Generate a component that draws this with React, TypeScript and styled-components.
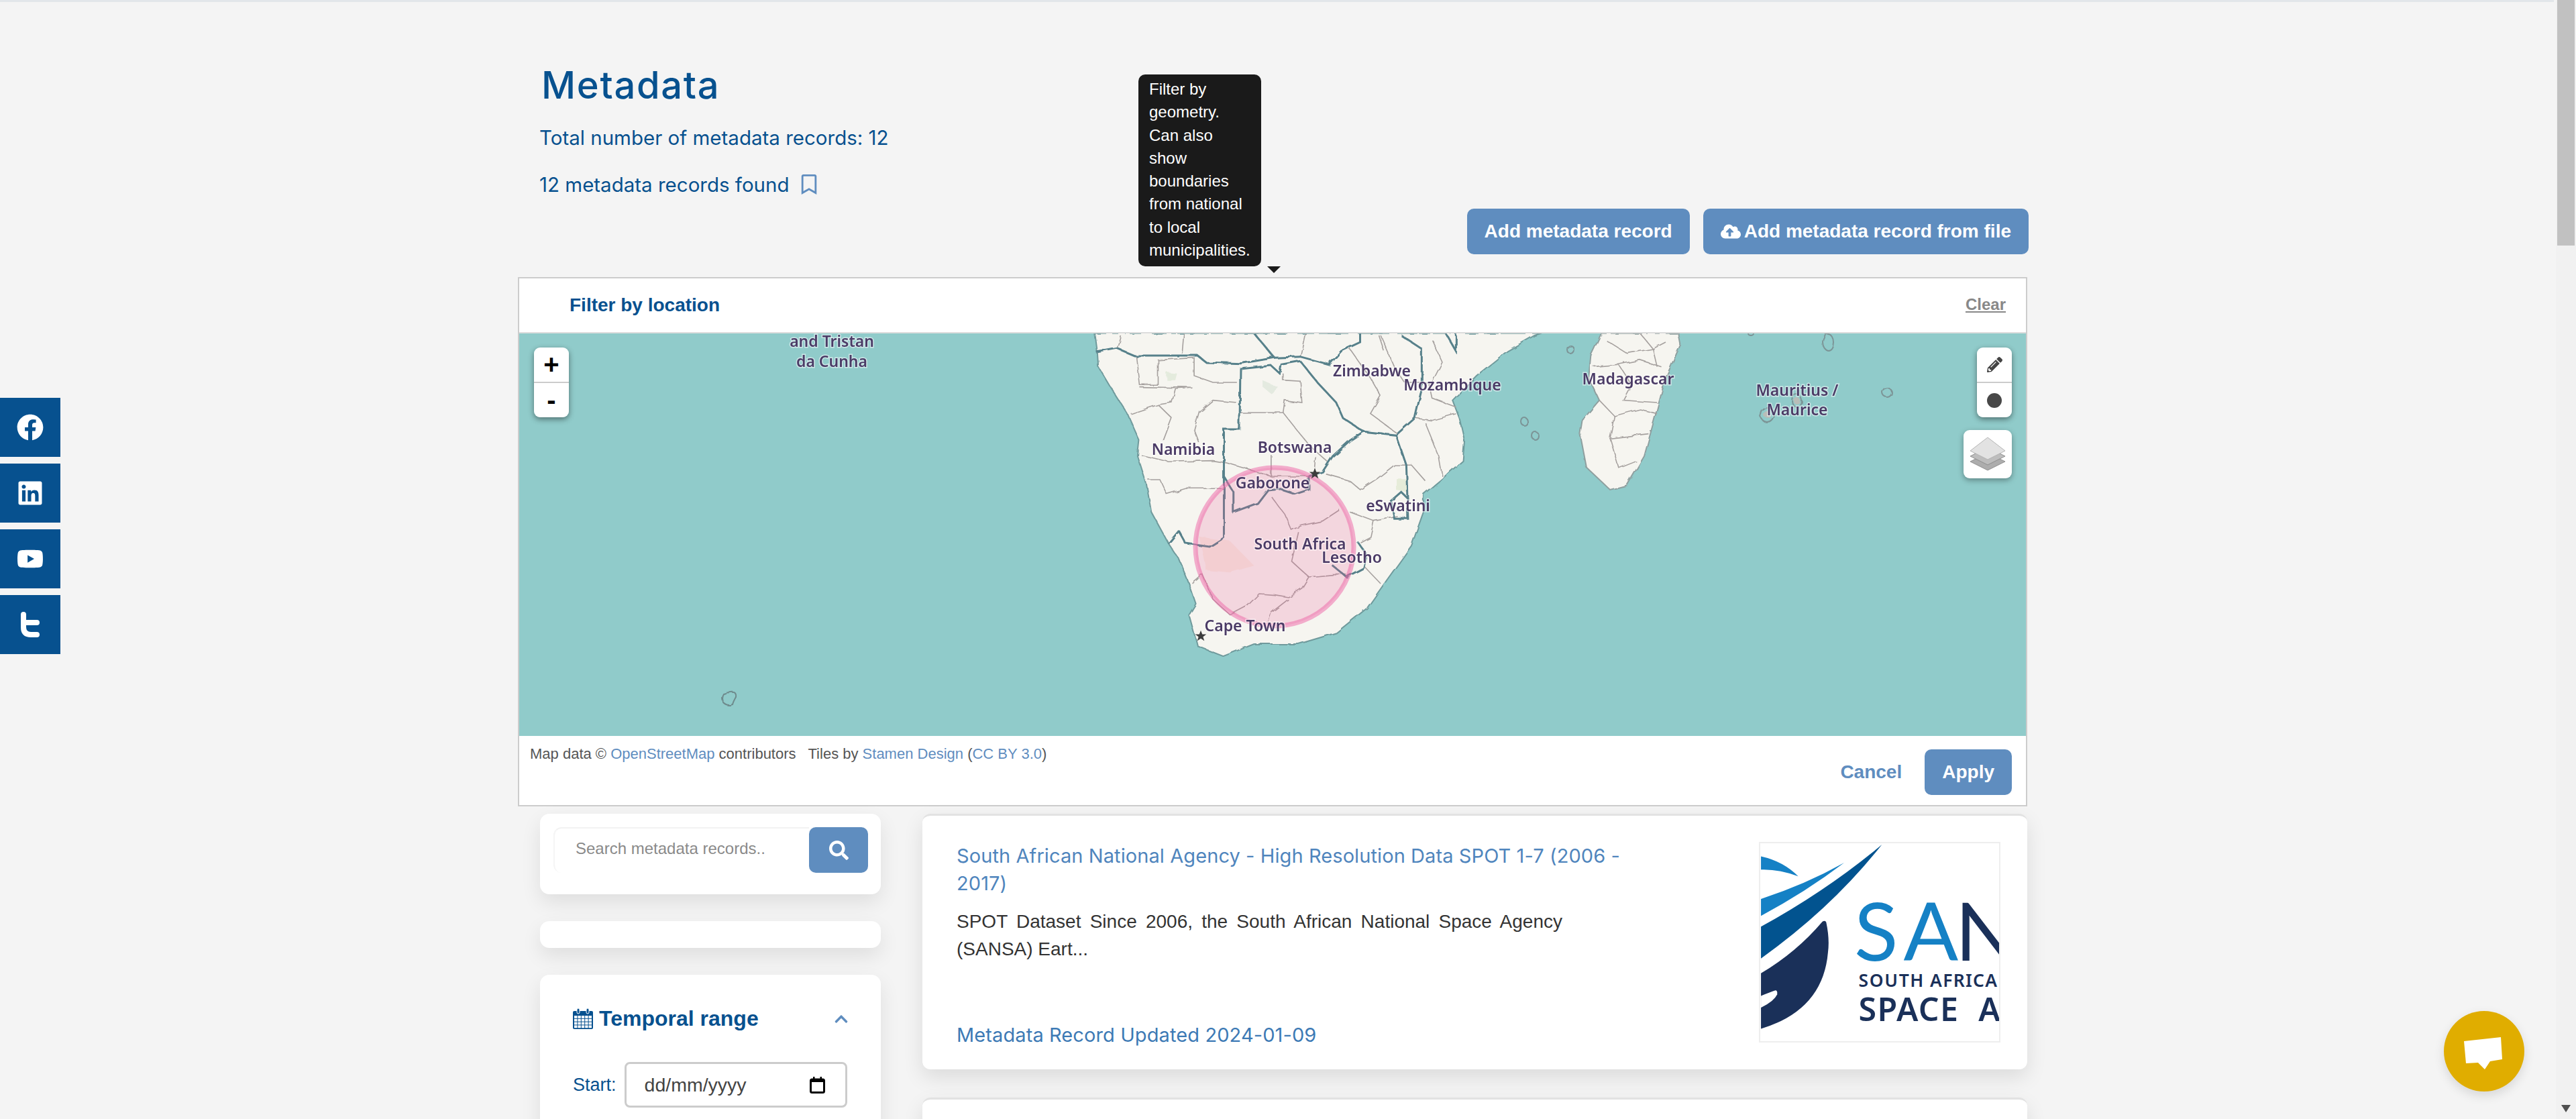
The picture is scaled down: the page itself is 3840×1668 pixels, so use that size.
import React from "react";
import styled, { createGlobalStyle } from "styled-components";
import { FaFacebook, FaLinkedin, FaYoutube, FaCloudUploadAlt, FaSearch, FaChevronUp, FaPencilAlt, FaRegBookmark } from "react-icons/fa";

const BLUE = "#07518f";
const SOFT_BLUE = "#5f8dbf";

const GlobalStyle = createGlobalStyle`
  html, body {
    margin: 0;
    height: 1668px;
    overflow: hidden;
    background: #f4f4f4;
    font-family: "Liberation Sans", Arial, sans-serif;
  }
  * { box-sizing: border-box; }
`;

const Page = styled.div`
  width: 3807px;
  height: 1668px;
  overflow: hidden;
  border-top: 3px solid #e2e6ea;
  padding-left: 772px;
`;

const Container = styled.div`
  position: relative;
  width: 2250px;
`;

const Header = styled.header`
  height: 410px;
  padding: 0 0 34px 32px;
  display: flex;
  justify-content: space-between;
  align-items: flex-end;
`;

const TitleBlock = styled.div`
  align-self: flex-start;
  padding-top: 94px;
`;

const Title = styled.h1`
  margin: 0 0 0 3px;
  font: 500 56px/60px Inter, sans-serif;
  letter-spacing: 1.7px;
  color: ${BLUE};
`;

const Count = styled.p`
  margin: 0;
  display: flex;
  align-items: center;
  gap: 14px;
  font: 400 29.5px/40px Inter, sans-serif;
  color: ${BLUE};
  &:first-of-type { margin-top: 28px; }
  & + & { margin-top: 30px; }
  svg { color: ${SOFT_BLUE}; font-size: 30px; }
`;

const Actions = styled.div`
  display: flex;
  gap: 20px;
  margin-right: -2px;
`;

const Button = styled.button`
  height: 68px;
  padding: 0 26px;
  border: 0;
  border-radius: 10px;
  background: ${SOFT_BLUE};
  color: #fff;
  font: 700 28px "Liberation Sans", sans-serif;
  display: flex;
  align-items: center;
  gap: 5px;
`;

const Tooltip = styled.div`
  position: absolute;
  left: 925px;
  top: 108px;
  width: 183px;
  height: 286px;
  padding: 5px 16px;
  border-radius: 10px;
  background: #1a1a1a;
  color: #fff;
  font-size: 24px;
  line-height: 34.3px;
  &::after {
    content: "";
    position: absolute;
    left: 192px;
    top: 286px;
    border: 10px solid transparent;
    border-top-color: #1a1a1a;
    border-bottom: 0;
  }
`;

const Panel = styled.section`
  height: 789px;
  border: 2px solid #ccc;
  background: #fff;
`;

const PanelHead = styled.div`
  height: 82px;
  padding: 0 30px 0 75px;
  border-bottom: 2px solid #ddd;
  display: flex;
  justify-content: space-between;
  align-items: center;
`;

const PanelTitle = styled.span`
  font-size: 28px;
  font-weight: 700;
  color: ${BLUE};
`;

const Clear = styled.span`
  margin-bottom: 2px;
  font-size: 24px;
  font-weight: 700;
  color: #888;
  text-decoration: underline;
`;

const MapArea = styled.div`
  position: relative;
  height: 600px;
  background: #90cbca;
  overflow: hidden;
`;

const MapSvg = styled.svg`
  display: block;
  width: 100%;
  height: 100%;
  filter: blur(0.5px);
`;

const MapLabel = styled.text`
  font-family: "Noto Sans", sans-serif;
  font-size: 23px;
  font-weight: 600;
  fill: #4b3b66;
  stroke: rgba(255, 255, 255, 0.55);
  stroke-width: 3px;
  paint-order: stroke;
  text-anchor: middle;
  dominant-baseline: middle;
`;

const ControlStack = styled.div<{ $side: "left" | "right" }>`
  position: absolute;
  top: 21px;
  ${(p) => (p.$side === "left" ? "left: 22px;" : "right: 21px;")}
  width: 52px;
  height: 104px;
  display: flex;
  flex-direction: column;
  border-radius: 9px;
  overflow: hidden;
  box-shadow: 0 3px 8px rgba(0, 0, 0, 0.45);
`;

const ControlButton = styled.div`
  flex: 1;
  background: #fff;
  display: flex;
  align-items: center;
  justify-content: center;
  font: 700 40px "Liberation Sans", sans-serif;
  color: #000;
  & + & { border-top: 2px solid #ccc; }
`;

const Dot = styled.span`
  width: 22px;
  height: 22px;
  border-radius: 50%;
  background: #484848;
`;

const LayersButton = styled.div`
  position: absolute;
  top: 144px;
  right: 21px;
  width: 72px;
  height: 72px;
  border-radius: 9px;
  background: #fff;
  display: flex;
  align-items: center;
  justify-content: center;
  box-shadow: 0 3px 8px rgba(0, 0, 0, 0.35);
`;

const PanelFoot = styled.div`
  height: 103px;
  padding: 15px 21px 0 16px;
  display: flex;
  justify-content: space-between;
  align-items: flex-start;
`;

const Attribution = styled.div`
  font-size: 22px;
  line-height: 24px;
  color: #555;
  white-space: pre;
  a { color: ${SOFT_BLUE}; text-decoration: none; }
`;

const FootActions = styled.div`
  display: flex;
  align-items: center;
  gap: 34px;
  margin-top: 5px;
`;

const Cancel = styled.span`
  font-size: 28px;
  font-weight: 700;
  color: ${SOFT_BLUE};
`;

const Content = styled.div`
  margin-top: 11px;
  padding-left: 33px;
  display: grid;
  grid-template-columns: 508px 1647px;
  column-gap: 62px;
  margin-right: -2px;
`;

const Sidebar = styled.aside`
  display: flex;
  flex-direction: column;
  gap: 40px;
`;

const SideCard = styled.div<{ $height: number }>`
  height: ${(p) => p.$height}px;
  border-radius: 14px;
  background: #fff;
  box-shadow: 0 12px 30px rgba(0, 0, 0, 0.09);
`;

const SearchCard = styled(SideCard)`
  padding: 20px 19px 0 20px;
`;

const SearchRow = styled.div`
  display: flex;
  height: 68px;
`;

const SearchInput = styled.div`
  flex: 1;
  padding: 0 0 6px 31px;
  border-top: 2px solid #f2f2f2;
  border-left: 2px solid #f5f5f5;
  border-radius: 12px 0 0 12px;
  display: flex;
  align-items: center;
  font-size: 24px;
  color: #8a8a8a;
`;

const SearchButton = styled.div`
  width: 88px;
  border-radius: 10px;
  background: ${SOFT_BLUE};
  color: #fff;
  display: flex;
  align-items: center;
  justify-content: center;
  font-size: 29px;
`;

const RangeCard = styled(SideCard)`
  padding: 47px 49px 0;
`;

const RangeHead = styled.div`
  display: flex;
  align-items: center;
  gap: 9px;
  font-size: 32px;
  font-weight: 700;
  color: ${BLUE};
  svg:last-child { margin-left: auto; color: ${SOFT_BLUE}; font-size: 22px; margin-right: -1px; }
`;

const DateRow = styled.div`
  margin-top: 46px;
  display: flex;
  align-items: center;
  gap: 12px;
  font-size: 27px;
  color: ${BLUE};
`;

const DateField = styled.div`
  width: 332px;
  height: 68px;
  padding: 0 30px 0 27px;
  border: 3px solid #ccc;
  border-radius: 8px;
  display: flex;
  justify-content: space-between;
  align-items: center;
  font-size: 28.5px;
  color: #444;
`;

const Results = styled.div`
  display: flex;
  flex-direction: column;
  gap: 42px;
`;

const ResultCard = styled.article`
  height: 381px;
  padding: 39px 40px 0 51px;
  border-top: 3px solid #e2e2e2;
  border-radius: 12px;
  background: #fff;
  box-shadow: 0 12px 30px rgba(0, 0, 0, 0.1);
  display: flex;
  justify-content: space-between;
`;

const ResultBody = styled.div`
  width: 1000px;
  height: 336px;
  display: flex;
  flex-direction: column;
`;

const ResultTitle = styled.h2`
  margin: 0;
  font: 400 29px/41px Inter, sans-serif;
  letter-spacing: 0.09px;
  color: #4f85bd;
`;

const ResultText = styled.p`
  margin: 16px 97px 0 0;
  font-size: 28px;
  line-height: 41px;
  text-align: justify;
  color: #333;
`;

const ResultDate = styled.div`
  margin-top: auto;
  padding-bottom: 28px;
  font: 400 29px/40px Inter, sans-serif;
  letter-spacing: 0.1px;
  color: #3d7ab5;
`;

const LogoBox = styled.div`
  width: 360px;
  height: 299px;
  border: 2px solid #eee;
  background: #fff;
  flex: none;
  overflow: hidden;
`;

const SocialBar = styled.nav`
  position: fixed;
  left: 0;
  top: 593px;
  display: flex;
  flex-direction: column;
  gap: 10px;
`;

const SocialLink = styled.a`
  width: 90px;
  height: 88px;
  background: ${BLUE};
  color: #fff;
  display: flex;
  align-items: center;
  justify-content: center;
  font-size: 40px;
`;

const ChatBubble = styled.div`
  position: fixed;
  left: 3643px;
  top: 1507px;
  width: 120px;
  height: 120px;
  border-radius: 50%;
  background: #e0ad00;
  box-shadow: 0 6px 16px rgba(0, 0, 0, 0.12);
`;

const ScrollTrack = styled.div`
  position: fixed;
  right: 0;
  top: 0;
  width: 30px;
  height: 1668px;
  background: #f1f1f1;
  &::before {
    content: "";
    position: absolute;
    left: 2px;
    right: 2px;
    top: 0;
    height: 366px;
    background: #c1c1c1;
  }
  &::after {
    content: "";
    position: absolute;
    left: 8px;
    bottom: 10px;
    border: 7px solid transparent;
    border-top: 11px solid #505050;
    border-bottom: 0;
  }
`;

const LAND = "M255 50 L262 130 L265 200 L300 290 L350 410 L385 530 L380 600 L405 720 L420 850 L470 990 L500 1060 L530 1170 L550 1260 L530 1310 L550 1420 L555 1450 L630 1495 L720 1440 L850 1440 L960 1390 L1050 1280 L1110 1150 L1180 1000 L1215 850 L1215 770 L1270 700 L1330 620 L1335 530 L1320 430 L1300 350 L1370 240 L1460 130 L1540 60 L1560 50 Z";

const BORDERS = [
  "M260 135 L320 118 L370 150 L555 150 L580 180 L680 185 L780 160 L855 155 L940 190 L975 130 L1030 90 L1030 50",
  "M720 50 L780 160",
  "M855 175 L800 190 L795 230 L770 195 L680 210 L678 480 L632 480 L632 965 L590 1005 L520 990 L500 935 L470 990",
  "M855 175 L905 270 L960 360 L980 430 L1040 490 L1000 530 L950 600 L920 670 L880 690",
  "M880 690 L880 750 L840 770 L790 745 L760 750 L730 810 L660 850 L660 760 L632 690",
  "M1040 490 L1135 505 L1190 430 L1210 300 L1210 120 L1150 60",
  "M1135 505 L1165 640 L1170 880 L1130 880 L1120 800 L1150 760 L1170 790",
  "M1020 980 L1050 1040 L1040 1100 L990 1140 L950 1090",
  "M1280 50 L1310 130 L1310 50",
];

const PROVINCES = [
  "M375 150 L385 280 L440 280 L440 170 L545 160 L545 240 L600 270 L670 270",
  "M385 290 L540 295 L490 300 L480 360 L440 370 L360 410",
  "M440 370 L480 430 L455 530",
  "M670 360 L600 350 L560 400 L545 480 L560 540",
  "M680 405 L805 405 L880 550 L935 625",
  "M805 405 L810 350 L860 360 L855 265 L805 260 L805 230",
  "M390 595 L470 625 L600 620 L640 630 L770 690 L770 595",
  "M410 705 L445 705 L465 770 L520 745 L630 745",
  "M770 690 L880 690",
  "M900 600 L895 680",
  "M770 780 L810 860 L830 930 L860 910 L920 890 L970 840",
  "M850 940 L830 1070 L880 1140 L950 1130 L990 1130",
  "M880 1140 L860 1190 L820 1230 L780 1220 L735 1215 L700 1270 L650 1310 L600 1240 L570 1130 L540 1170",
  "M820 1240 L770 1300 L760 1350",
  "M930 680 L1000 710 L1030 750 L1080 700 L1130 640 L1180 640 L1220 710",
  "M1000 850 L1070 890 L1140 870",
  "M1070 890 L1060 960 L1030 985",
  "M1040 1090 L1090 1170",
  "M1190 430 L1240 440 L1310 410",
  "M1060 410 L1140 500",
  "M1000 120 L1060 250 L1090 330 L1060 410",
  "M1090 60 L1130 200 L1160 270 L1230 270 L1240 340 L1310 380",
  "M1220 450 L1260 600 L1270 690",
  "M1240 80 L1270 180 L1240 270",
  "M330 60 L320 118",
  "M515 50 L510 140",
  "M870 50 L855 155",
  "M1085 60 L1100 130",
];

const MADAGASCAR = "M510 650 L485 750 L480 850 L505 950 L465 1040 L460 1100 L475 1250 L530 1350 L570 1330 L610 1200 L660 850 L695 700 L690 650 Z";
const MADAGASCAR_LINES = [
  "M520 680 L570 740 L630 720 L660 690",
  "M490 800 L550 790 L600 770 L650 800",
  "M550 790 L580 880 L560 950 L640 960",
  "M505 950 L540 1020 L600 990 L640 1010",
  "M540 1020 L530 1120 L620 1100",
  "M530 1120 L550 1250 L590 1220",
  "M600 650 L630 720 L640 800",
];

const LABELS: { text: string; x: number; y: number }[] = [
  { text: "and Tristan", x: 1238, y: 511 },
  { text: "da Cunha", x: 1238, y: 541 },
  { text: "Zimbabwe", x: 2043, y: 555 },
  { text: "Mozambique", x: 2163, y: 576 },
  { text: "Madagascar", x: 2425, y: 567 },
  { text: "Mauritius /", x: 2677, y: 584 },
  { text: "Maurice", x: 2677, y: 613 },
  { text: "Namibia", x: 1762, y: 672 },
  { text: "Botswana", x: 1928, y: 669 },
  { text: "Gaborone", x: 1895, y: 722 },
  { text: "eSwatini", x: 2082, y: 756 },
  { text: "South Africa", x: 1936, y: 813 },
  { text: "Lesotho", x: 2013, y: 833 },
  { text: "Cape Town", x: 1854, y: 935 },
];

const ISLANDS = [
  [2339, 521, 5, 6],
  [2270, 628, 5, 6],
  [2286, 649, 5, 6],
  [2723, 510, 8, 12],
  [2811, 585, 7, 7],
  [2632, 618, 10, 11],
  [2677, 598, 7, 9],
  [2608, 497, 4, 3],
];

const Star = ({ x, y }: { x: number; y: number }) => (
  <polygon
    transform={`translate(${x} ${y}) scale(0.75)`}
    points="0,-11 3,-3.5 11,-3.5 4.5,1.5 7,9.5 0,5 -7,9.5 -4.5,1.5 -11,-3.5 -3,-3.5"
    fill="#3c3c3c"
  />
);

const SouthernAfricaMap = () => (
  <MapSvg viewBox="772 497 2246 600" preserveAspectRatio="none">
    <defs>
      <filter id="wobble" x="-5%" y="-5%" width="110%" height="110%">
        <feTurbulence type="fractalNoise" baseFrequency="0.06" numOctaves="2" seed="4" />
        <feDisplacementMap in="SourceGraphic" scale="6" />
      </filter>
    </defs>
    <g filter="url(#wobble)" fill="none">
      <g transform="translate(1500 480) scale(0.5102 0.3333)">
        <path d={LAND} fill="#f6f5f0" stroke="#6f9a9c" strokeWidth="2" vectorEffect="non-scaling-stroke" />
        <path d="M560 960 L650 980 L720 1090 L650 1120 L580 1110 Z" fill="#f5ebe0" />
        <path d="M745 260 L790 290 L770 320 L745 290 Z" fill="#e4eae0" />
        <path d="M1135 700 L1165 700 L1165 760 L1135 750 Z" fill="#e6ecd9" />
        <path d="M465 225 L495 230 L490 260 L465 260 Z" fill="#e4ebdd" />
        {PROVINCES.map((d) => (
          <path key={d} d={d} stroke="#a5a09e" strokeWidth="1.6" vectorEffect="non-scaling-stroke" />
        ))}
        {BORDERS.map((d) => (
          <path key={d} d={d} stroke="#56808a" strokeWidth="3" vectorEffect="non-scaling-stroke" />
        ))}
      </g>
      <g transform="translate(2060 280) scale(0.6378 0.3333)">
        <path d={MADAGASCAR} fill="#f6f5f0" stroke="#8f9f9f" strokeWidth="2" vectorEffect="non-scaling-stroke" />
        {MADAGASCAR_LINES.map((d) => (
          <path key={d} d={d} stroke="#a5a09e" strokeWidth="1.6" vectorEffect="non-scaling-stroke" />
        ))}
      </g>
      {ISLANDS.map(([cx, cy, rx, ry]) => (
        <ellipse key={cx} cx={cx} cy={cy} rx={rx} ry={ry} stroke="#7c9496" strokeWidth="2" />
      ))}
      <circle cx="2677" cy="598" r="5" fill="#b9bdb8" />
      <circle cx="2632" cy="618" r="5" fill="#b9bdb8" />
      <path d="M1076 1034 Q1082 1032 1087 1032 Q1096 1030 1095 1039 Q1091 1046 1090 1050 Q1082 1053 1076 1047 Q1072 1040 1076 1034 Z" stroke="#6e8a8c" strokeWidth="2" />
    </g>
    <ellipse cx="1898" cy="815" rx="118" ry="118" fill="rgba(235, 90, 150, 0.2)" stroke="rgba(238, 100, 165, 0.5)" strokeWidth="7" />
    <Star x={1958} y={706} />
    <Star x={1788} y={948} />
    {LABELS.map((l) => (
      <MapLabel key={l.text} x={l.x} y={l.y}>{l.text}</MapLabel>
    ))}
  </MapSvg>
);

const SansaLogo = () => (
  <svg viewBox="220 49 1070 892" width="356" height="295" style={{ display: "block" }}>
    <path d="M220 108 Q320 130 388 198 Q300 165 220 168 Z" fill="#1581c5" />
    <path d="M220 300 Q420 235 595 137 Q420 270 220 376 Z" fill="#1581c5" />
    <path d="M220 425 Q520 260 765 55 Q540 340 220 568 Z" fill="#02538f" />
    <path d="M220 635 Q380 540 497 402 Q510 395 514 405 Q530 480 522 540 Q500 800 220 885 Z" fill="#1a3059" />
    <path d="M220 737 Q260 720 285 712 Q295 712 293 730 Q280 760 220 790 Z" fill="#fff" />
    <text x="640" y="578" fontFamily="Lato, sans-serif" fontSize="365" fill="#1581c5">S</text>
    <text x="862" y="578" fontFamily="Lato, sans-serif" fontSize="365" fill="#1581c5">A</text>
    <text x="1095" y="578" fontFamily="Lato, sans-serif" fontSize="365" fill="#1a3059">N</text>
    <text x="660" y="695" fontFamily="Noto Sans, sans-serif" fontWeight="600" fontSize="80" letterSpacing="5" fill="#1a3059">SOUTH</text>
    <text x="982" y="695" fontFamily="Noto Sans, sans-serif" fontWeight="600" fontSize="80" letterSpacing="4" fill="#1a3059">AFRICA</text>
    <text x="660" y="850" fontFamily="Noto Sans, sans-serif" fontWeight="600" fontSize="146" letterSpacing="4" fill="#1a3059">SPACE</text>
    <text x="1200" y="850" fontFamily="Noto Sans, sans-serif" fontWeight="600" fontSize="146" fill="#1a3059">A</text>
  </svg>
);

const TwitterT = () => (
  <svg width="36" height="40" viewBox="0 0 36 40" fill="none" stroke="#fff" strokeWidth="8" strokeLinecap="round" strokeLinejoin="round">
    <path d="M8 5 V24 Q8 35 19 35 H28" />
    <path d="M8 17 H28" />
  </svg>
);

const CalendarIcon = () => (
  <svg width="30" height="31" viewBox="0 0 30 31">
    <rect x="0" y="4" width="30" height="27" rx="2" fill={BLUE} />
    <rect x="6" y="0" width="4" height="8" rx="2" fill={BLUE} stroke="#fff" />
    <rect x="20" y="0" width="4" height="8" rx="2" fill={BLUE} stroke="#fff" />
    {[0, 1, 2, 3].map((r) =>
      [0, 1, 2, 3, 4].map((c) => (
        <rect key={`${r}-${c}`} x={2 + c * 5.4} y={11 + r * 4.8} width="4.4" height="3.8" fill="#fff" />
      ))
    )}
  </svg>
);

const LayersIcon = () => (
  <svg width="52" height="50" viewBox="0 0 52 50">
    <polygon points="0,36 26,23 52,36 26,49" fill="#adadad" stroke="#8f8f8f" />
    <polygon points="0,28 26,15 52,28 26,41" fill="#bdbdbd" stroke="#8f8f8f" />
    <polygon points="0,20 26,0 52,20 26,33" fill="#e2e2e2" stroke="#b4b4b4" />
  </svg>
);

const DatePickerIcon = () => (
  <svg width="23" height="25" viewBox="0 0 23 25">
    <rect x="1.5" y="4" width="20" height="19.5" rx="2" fill="#fff" stroke="#000" strokeWidth="3" />
    <rect x="1.5" y="3" width="20" height="5" fill="#000" />
    <rect x="5" y="0" width="2.5" height="4" fill="#000" />
    <rect x="15.5" y="0" width="2.5" height="4" fill="#000" />
  </svg>
);

const App = (): JSX.Element => {
  return (
    <>
      <GlobalStyle />
      <Page>
        <Container>
          <Header>
            <TitleBlock>
              <Title>Metadata</Title>
              <Count>Total number of metadata records: 12</Count>
              <Count>12 metadata records found <FaRegBookmark /></Count>
            </TitleBlock>
            <Actions>
              <Button>Add metadata record</Button>
              <Button><FaCloudUploadAlt size={30} />Add metadata record from file</Button>
            </Actions>
          </Header>
          <Tooltip>
            Filter by<br />geometry.<br />Can also<br />show<br />boundaries<br />from national<br />to local<br />municipalities.
          </Tooltip>
          <Panel>
            <PanelHead>
              <PanelTitle>Filter by location</PanelTitle>
              <Clear>Clear</Clear>
            </PanelHead>
            <MapArea>
              <SouthernAfricaMap />
              <ControlStack $side="left">
                <ControlButton>+</ControlButton>
                <ControlButton>-</ControlButton>
              </ControlStack>
              <ControlStack $side="right">
                <ControlButton><FaPencilAlt size={23} color="#444" /></ControlButton>
                <ControlButton><Dot /></ControlButton>
              </ControlStack>
              <LayersButton><LayersIcon /></LayersButton>
            </MapArea>
            <PanelFoot>
              <Attribution>
                Map data © <a>OpenStreetMap</a> contributors{"   "}Tiles by <a>Stamen Design</a> (<a>CC BY 3.0</a>)
              </Attribution>
              <FootActions>
                <Cancel>Cancel</Cancel>
                <Button>Apply</Button>
              </FootActions>
            </PanelFoot>
          </Panel>
          <Content>
            <Sidebar>
              <SearchCard $height={120}>
                <SearchRow>
                  <SearchInput>Search metadata records..</SearchInput>
                  <SearchButton><FaSearch /></SearchButton>
                </SearchRow>
              </SearchCard>
              <SideCard $height={40} />
              <RangeCard $height={420}>
                <RangeHead>
                  <CalendarIcon />
                  Temporal range
                  <FaChevronUp />
                </RangeHead>
                <DateRow>
                  Start:
                  <DateField>dd/mm/yyyy<DatePickerIcon /></DateField>
                </DateRow>
              </RangeCard>
            </Sidebar>
            <Results>
              <ResultCard>
                <ResultBody>
                  <ResultTitle>South African National Agency - High Resolution Data SPOT 1-7 (2006 - 2017)</ResultTitle>
                  <ResultText>SPOT Dataset Since 2006, the South African National Space Agency (SANSA) Eart...</ResultText>
                  <ResultDate>Metadata Record Updated 2024-01-09</ResultDate>
                </ResultBody>
                <LogoBox><SansaLogo /></LogoBox>
              </ResultCard>
              <ResultCard />
            </Results>
          </Content>
        </Container>
      </Page>
      <SocialBar>
        <SocialLink><FaFacebook /></SocialLink>
        <SocialLink><FaLinkedin /></SocialLink>
        <SocialLink><FaYoutube /></SocialLink>
        <SocialLink><TwitterT /></SocialLink>
      </SocialBar>
      <ChatBubble>
        <svg width="120" height="120" viewBox="0 0 120 120">
          <polygon points="30,45 85,39 87,72 69,75 61,87 51,77 33,78" fill="#fff" />
        </svg>
      </ChatBubble>
      <ScrollTrack />
    </>
  );
};

export default App;
